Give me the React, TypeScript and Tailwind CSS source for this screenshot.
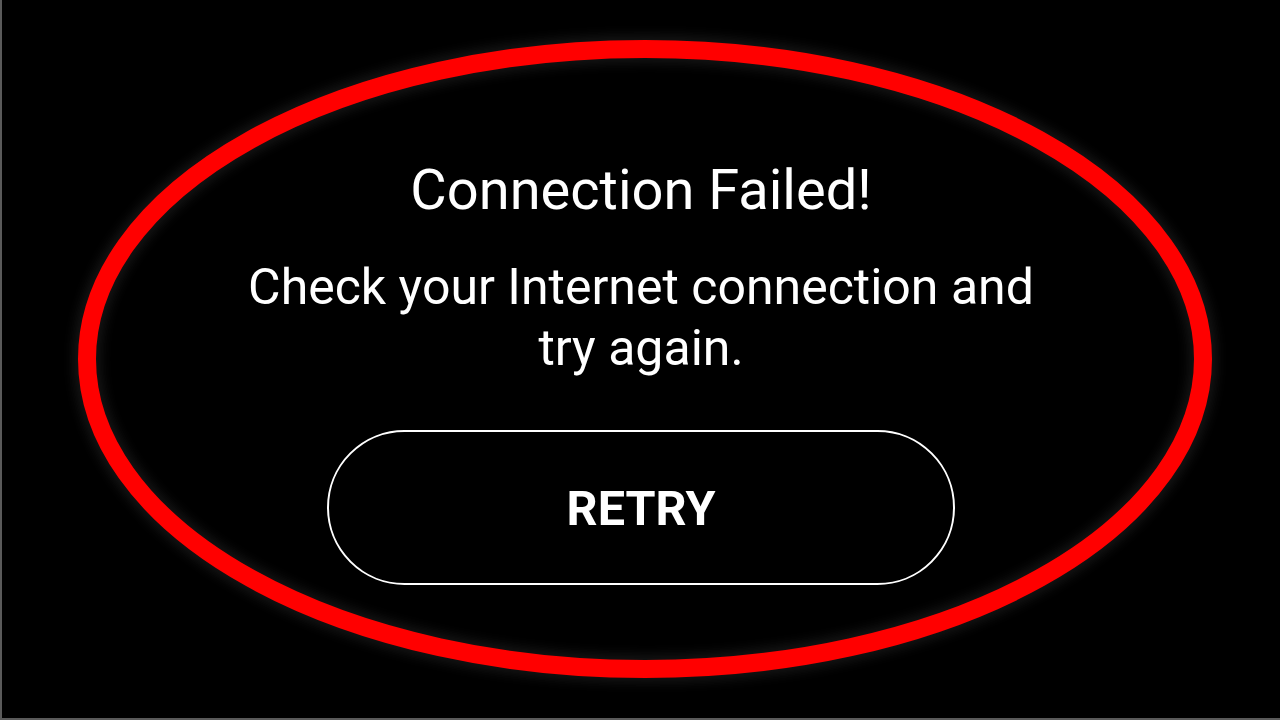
import React from 'react';

const RedCircle: React.FC = () => (
    <svg className="absolute inset-0 pointer-events-none" width="1280" height="720" viewBox="0 0 1280 720">
        <defs>
            <filter id="halo" x="-10%" y="-10%" width="120%" height="120%">
                <feGaussianBlur stdDeviation="6" />
            </filter>
        </defs>
        <ellipse cx="643" cy="359" rx="558" ry="310" fill="none" stroke="#3a3a3a" strokeWidth="28" filter="url(#halo)" opacity="0.35" />
        <ellipse cx="643" cy="359" rx="558" ry="310" fill="none" stroke="#ff0000" strokeWidth="18" />
    </svg>
);

export default function App() {
    return (
        <div
            className="relative w-[1280px] h-[720px] overflow-hidden bg-black border-l-2 border-b-2 border-[#5a5a5a] text-white"
            style={{ fontFamily: 'Roboto, "Noto Sans", sans-serif' }}
        >
            <div className="flex flex-col items-center pt-[160px]">
                <h1 className="text-[56px] leading-[60px] font-normal">Connection Failed!</h1>
                <p className="mt-[37px] text-[50px] leading-[61px] text-center">
                    Check your Internet connection and
                    <br />
                    try again.
                </p>
                <button className="mt-[51px] w-[628px] h-[155px] pt-1 rounded-full border-2 border-white text-[48.5px] font-bold">
                    RETRY
                </button>
            </div>
            <RedCircle />
        </div>
    );
}
